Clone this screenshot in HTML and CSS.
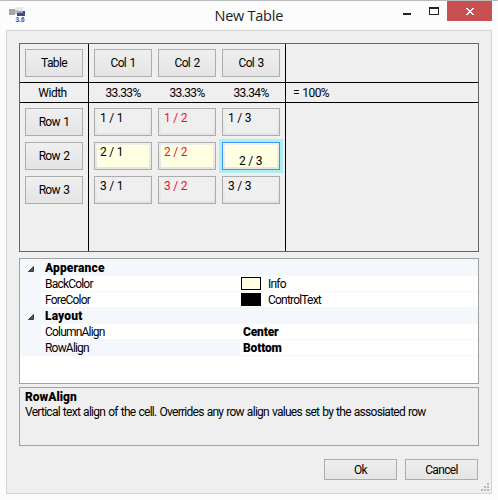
FILE: index.html
```html
<!DOCTYPE html>
<html lang="en">
<head>
<meta charset="utf-8">
<title>New Table</title>
<link rel="stylesheet" href="styles.css">
</head>
<body>
<div class="window">
  <header class="titlebar">
    <svg class="app-icon" width="18" height="16" viewBox="0 0 18 16" shape-rendering="crispEdges">
      <rect x="0" y="2" width="6" height="6" fill="#a6a6a6"/>
      <rect x="6" y="0" width="8" height="5" fill="#e8e8e8"/>
      <rect x="6" y="3" width="3" height="4" fill="#c4c4c8"/>
      <rect x="8" y="4" width="8" height="5" fill="#414a80"/>
      <rect x="8" y="4" width="6" height="2" fill="#9a9fbe"/>
      <text x="6.5" y="15" class="version" textLength="9">3.6</text>
    </svg>
    <h1 class="title">New Table</h1>
    <div class="controls">
      <svg width="44" height="20" viewBox="0 0 44 20" shape-rendering="crispEdges">
        <rect x="0" y="12" width="8" height="2" fill="#222"/>
        <path d="M26 6h10v8h-10zM27 8v5h8v-5z" fill="#222" fill-rule="evenodd"/>
      </svg>
      <div class="close">
        <svg width="8" height="7" viewBox="0 0 8 7" shape-rendering="crispEdges" fill="#fff">
          <path d="M0 0h2v1h1v1h2v-1h1v-1h2v1h-1v1h-1v1h-1v1h1v1h1v1h1v1h-2v-1h-1v-1h-2v1h-1v1h-2v-1h1v-1h1v-1h1v-1h-1v-1h-1v-1h-1z"/>
        </svg>
      </div>
    </div>
  </header>
  <main class="client">
    <section class="designer">
      <div class="col row-heads">
        <div class="band head"><div class="btn">Table</div></div>
        <div class="band width"><span>Width</span></div>
        <div class="stack"><div class="btn">Row 1</div><div class="btn">Row 2</div><div class="btn">Row 3</div></div>
      </div>
      <div class="col columns">
        <div class="band head"><div class="btn">Col 1</div><div class="btn">Col 2</div><div class="btn">Col 3</div></div>
        <div class="band width"><span>33.33%</span><span>33.33%</span><span>33.34%</span></div>
        <div class="cells">
          <div class="cell"><span>1 / 1</span></div><div class="cell red"><span>1 / 2</span></div><div class="cell"><span>1 / 3</span></div>
          <div class="cell info"><span>2 / 1</span></div><div class="cell red info"><span>2 / 2</span></div><div class="cell info selected"><span>2 / 3</span></div>
          <div class="cell"><span>3 / 1</span></div><div class="cell red"><span>3 / 2</span></div><div class="cell"><span>3 / 3</span></div>
        </div>
      </div>
      <div class="col rest">
        <div class="band head"></div>
        <div class="band total"><span>= 100%</span></div>
      </div>
    </section>
    <section class="properties">
      <div class="category first"><svg class="arrow" width="6" height="6" viewBox="0 0 6 6"><path d="M5.5 .5v5h-5z" fill="#555" stroke="#222" stroke-width=".8"/></svg><b>Apperance</b></div>
      <div class="prop"><span class="name">BackColor</span><span class="value"><span class="swatch ivory"></span>Info</span></div>
      <div class="prop"><span class="name">ForeColor</span><span class="value"><span class="swatch black"></span>ControlText</span></div>
      <div class="category"><svg class="arrow" width="6" height="6" viewBox="0 0 6 6"><path d="M5.5 .5v5h-5z" fill="#555" stroke="#222" stroke-width=".8"/></svg><b>Layout</b></div>
      <div class="prop"><span class="name">ColumnAlign</span><span class="value"><b>Center</b></span></div>
      <div class="prop active"><span class="name">RowAlign</span><span class="value"><b>Bottom</b></span></div>
    </section>
    <section class="help">
      <b>RowAlign</b>
      <p>Vertical text align of the cell. Overrides any row align values set by the assosiated row</p>
    </section>
    <footer class="actions"><div class="btn">Ok</div><div class="btn">Cancel</div></footer>
    <svg class="grip" width="8" height="8" viewBox="0 0 8 8" fill="#b8b8b8" shape-rendering="crispEdges"><path d="M6 0h2v2h-2zM3 3h2v2h-2zM6 3h2v2h-2zM0 6h2v2h-2zM3 6h2v2h-2zM6 6h2v2h-2z"/></svg>
  </main>
</div>
</body>
</html>
```
FILE: styles.css
```css
* { box-sizing: border-box; }
body {
  margin: 0;
  font: 12px/16px Roboto, "Liberation Sans", sans-serif;
  color: #000;
}
.window {
  width: 498px;
  height: 500px;
  padding: 0 6px;
  background: #fcfcfc;
  border-top: 1px solid #bbb;
}
.titlebar {
  display: flex;
  justify-content: space-between;
  height: 29px;
}
.app-icon { margin: 6px 0 0 3px; }
.version { font: bold 6.5px "Liberation Sans", sans-serif; fill: #414a80; }
.title {
  margin: 5px 0 0 79px;
  width: 80px;
  font: 14.5px/20px "Open Sans", "Noto Sans", sans-serif;
  letter-spacing: -.25px;
  white-space: nowrap;
  color: #222;
}
.controls { display: flex; }
.close {
  width: 45px;
  height: 20px;
  padding: 7px 0 0 19px;
  background: #c75050;
}
.close svg { display: block; }
.client {
  position: relative;
  width: 486px;
  height: 464px;
  padding: 12px;
  border: 1px solid #d4d4d4;
  background: #efefef;
}
.designer {
  display: flex;
  width: 460px;
  height: 209px;
  border: 1px solid #646464;
}
.col { border-right: 1px solid #000; }
.row-heads { width: 69px; }
.columns { width: 197px; }
.rest { flex: 1; border: 0; }
.band { display: flex; border-bottom: 1px solid #000; }
.head { height: 39px; padding: 5px 0 0 5px; gap: 6px; }
.width { height: 20px; padding: 2px 0 0 5px; gap: 6px; }
.width span { width: 58px; text-align: center; letter-spacing: -.65px; }
.row-heads .width span { padding-right: 3px; letter-spacing: -.5px; }
.total { height: 20px; padding: 2px 0 0 7px; letter-spacing: -.6px; word-spacing: 1px; }
.btn {
  width: 58px;
  height: 28px;
  border: 1px solid #acacac;
  background: linear-gradient(#efefef, #e4e4e4);
  text-align: center;
  line-height: 27px;
  letter-spacing: -.65px;
  word-spacing: 1px;
}
.stack { display: grid; gap: 6px; padding: 5px; }
.cells {
  display: grid;
  grid-template-columns: repeat(3, 58px);
  gap: 6px;
  padding: 5px;
}
.cell {
  height: 28px;
  border: 1px solid #acacac;
  background: linear-gradient(#efefef, #e4e4e4);
  padding: 2px;
}
.cell span {
  display: block;
  height: 22px;
  padding-left: 3px;
  background: #efefef;
  line-height: 14px;
  letter-spacing: -.25px;
}
.red { color: #f01018; }
.info span { background: #ffffe1; }
.selected { border-color: #3c96f5; box-shadow: 0 0 0 3px #afeeee; }
.selected span { padding: 9px 0 0 14px; }
.properties {
  width: 460px;
  height: 126px;
  margin-top: 6px;
  border: 1px solid #a0a0a0;
  background: #fff;
  letter-spacing: -.8px;
}
.category {
  display: flex;
  align-items: center;
  height: 16px;
  padding-left: 8px;
  background: #f4f7fc;
}
.category.first { height: 17px; }
.category b { margin-left: 11px; font-weight: 900; line-height: 16px; letter-spacing: .15px; }
.category.first b { padding-top: 1px; }
.arrow { margin-top: 2px; }
.prop {
  display: flex;
  height: 16px;
  border-left: 21px solid #f4f7fc;
  border-bottom: 1px solid #f4f7fc;
  line-height: 16px;
}
.name { width: 199px; padding-left: 4px; }
.active .name { background: #f4f7fc; }
.value { display: flex; padding-left: 3px; }
.value b { font-weight: 900; letter-spacing: -.15px; }
.swatch {
  width: 20px;
  height: 13px;
  margin: 1px 7px 0 -2px;
  border: 1px solid #000;
}
.ivory { background: #ffffe1; }
.black { background: #000; }
.help {
  width: 460px;
  height: 59px;
  margin-top: 3px;
  padding: 1px 5px;
  border: 1px solid #a0a0a0;
}
.help b { display: block; font-weight: 900; height: 15px; }
.help p { margin: 0; white-space: nowrap; line-height: 17px; letter-spacing: -.72px; word-spacing: .7px; }
.actions {
  display: flex;
  justify-content: flex-end;
  gap: 8px;
  margin-top: 13px;
  padding-right: 1px;
}
.actions .btn { width: 73px; height: 21px; line-height: 20px; }
.grip { position: absolute; right: 2px; bottom: 2px; }
```
